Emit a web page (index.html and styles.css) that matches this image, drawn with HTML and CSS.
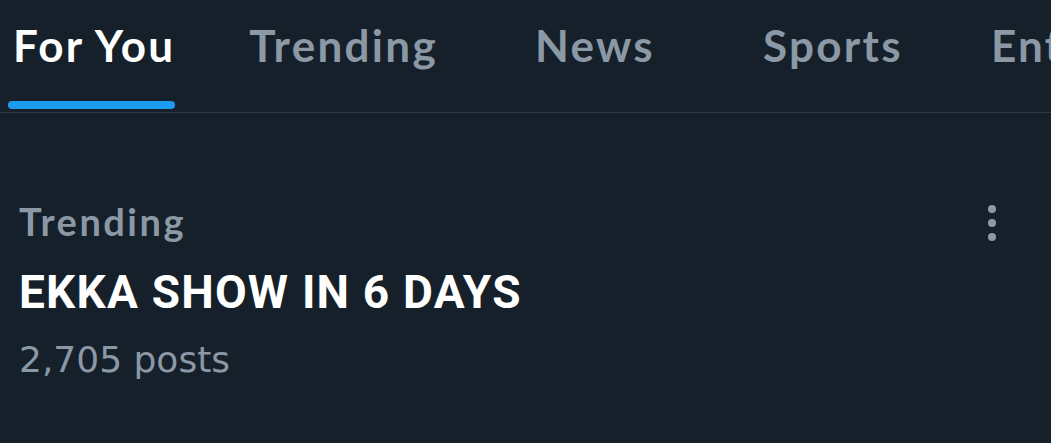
FILE: index.html
```html
<!DOCTYPE html>
<html lang="en">
<head>
    <meta charset="UTF-8">
    <meta name="viewport" content="width=device-width, initial-scale=1.0">
    <title>Explore</title>
    <link rel="stylesheet" href="styles.css">
</head>
<body>

    <!-- Tab bar -->
    <nav class="tabs">
        <div class="tab active">
            <span class="tab-label">For You</span>
            <span class="tab-indicator"></span>
        </div>
        <div class="tab tab-trending">
            <span class="tab-label">Trending</span>
        </div>
        <div class="tab tab-news">
            <span class="tab-label">News</span>
        </div>
        <div class="tab tab-sports">
            <span class="tab-label">Sports</span>
        </div>
        <div class="tab tab-ent">
            <span class="tab-label">Entertainment</span>
        </div>
    </nav>

    <!-- Trend item -->
    <section class="trend">
        <div class="trend-text">
            <div class="trend-context">Trending</div>
            <div class="trend-title">EKKA SHOW IN 6 DAYS</div>
            <div class="trend-count">2,705 posts</div>
        </div>
        <svg class="trend-more" width="40" height="40" viewBox="0 0 40 40" aria-hidden="true">
            <circle cx="20" cy="6" r="4"/>
            <circle cx="20" cy="20" r="4"/>
            <circle cx="20" cy="34" r="4"/>
        </svg>
    </section>

</body>
</html>
```

FILE: styles.css
```css
/* Page */
body {
    margin: 0;
    background-color: #16202a;
    overflow: hidden;
    font-family: Lato, "Noto Sans", sans-serif;
}

/* Tab bar */
.tabs {
    display: flex;
    height: 112px;
    border-bottom: 1px solid #2f3943;
    padding-left: 8px;
    white-space: nowrap;
    overflow: hidden;
}

.tab {
    display: flex;
    flex-direction: column;
    flex-shrink: 0;
    padding-top: 19px;
}

.tab-label {
    font-size: 44px;
    line-height: 52px;
    font-weight: 700;
    letter-spacing: 2.3px;
    color: #8b98a5;
    padding: 0 5px;
}

.tab.active .tab-label {
    color: #ffffff;
}

.tab-indicator {
    margin-top: 30px;
    margin-right: 5px;
    height: 8px;
    border-radius: 4px;
    background-color: #1d9bf0;
}

.tab-trending { margin-left: 64px; }
.tab-news { margin-left: 87px; }
.tab-sports { margin-left: 98px; }
.tab-ent { margin-left: 78px; }

/* Trend item */
.trend {
    display: flex;
    justify-content: space-between;
    align-items: flex-start;
    padding: 86px 39px 0 19px;
}

.trend-context {
    font-size: 38px;
    line-height: 44px;
    font-weight: 700;
    letter-spacing: 2.5px;
    color: #8b98a5;
}

.trend-title {
    margin-top: 21px;
    font-family: Roboto, "Liberation Sans", sans-serif;
    font-size: 46px;
    line-height: 56px;
    font-weight: 700;
    letter-spacing: 1.2px;
    color: #ffffff;
}

.trend-count {
    margin-top: 18px;
    font-family: "DejaVu Sans", sans-serif;
    font-size: 36px;
    line-height: 44px;
    color: #8b98a5;
}

.trend-more {
    margin-top: 4px;
    fill: #8b98a5;
}
```
